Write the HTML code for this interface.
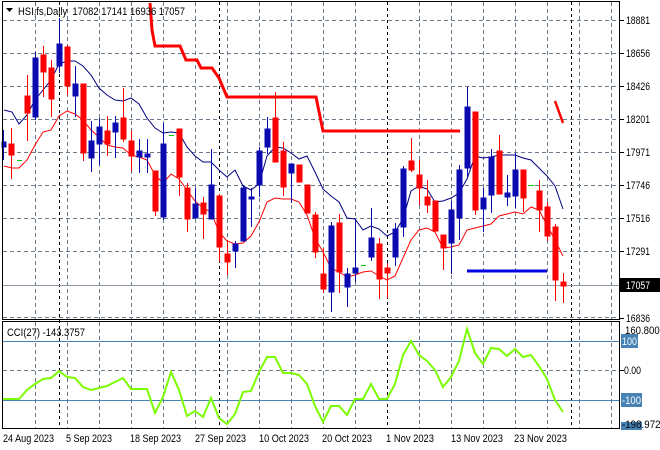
<!DOCTYPE html><html><head><meta charset="utf-8"><style>
html,body{margin:0;padding:0;background:#fff;width:660px;height:450px;overflow:hidden}
svg{display:block}
text{font-family:"Liberation Sans",sans-serif;font-size:11px;fill:#000}
</style></head><body>
<svg width="660" height="450" xmlns="http://www.w3.org/2000/svg">
<rect width="660" height="450" fill="#fff"/>
<g stroke="#6e7b8b" stroke-width="1" stroke-dasharray="4,3" fill="none">
<path d="M3 20.5H620M3 53.5H620M3 86.5H620M3 119.5H620M3 152.5H620M3 185.5H620M3 218.5H620M3 251.5H620M3 317.5H620"/>
<path d="M35.5 2V319M67.5 2V319M99.5 2V319M131.5 2V319M163.5 2V319M195.5 2V319M227.5 2V319M259.5 2V319M291.5 2V319M323.5 2V319M355.5 2V319M419.5 2V319M451.5 2V319M483.5 2V319M515.5 2V319M547.5 2V319M579.5 2V319M611.5 2V319"/>
<path d="M35.5 322V429M67.5 322V429M99.5 322V429M131.5 322V429M163.5 322V429M195.5 322V429M227.5 322V429M259.5 322V429M291.5 322V429M323.5 322V429M355.5 322V429M419.5 322V429M451.5 322V429M483.5 322V429M515.5 322V429M547.5 322V429M579.5 322V429M611.5 322V429M3 370.5H620"/>
</g>
<g stroke="#000" stroke-width="1" stroke-dasharray="3,3">
<path d="M59.5 2V429M219.5 2V429M387.5 2V429M571.5 2V429"/>
</g>
<line x1="3" y1="285.5" x2="620" y2="285.5" stroke="#8a96a2" stroke-width="1"/>
<polyline fill="none" stroke="#f00" stroke-width="3" points="150,3 152,30 155,46 180,46 186,60 197,60 201,68 212,68 219,78 227,97 316,97 323,131 460,131"/>
<line x1="467" y1="271" x2="547" y2="271" stroke="#0000e0" stroke-width="3"/>
<line x1="555" y1="101" x2="563" y2="123" stroke="#f00" stroke-width="2.5"/>
<polyline fill="none" stroke="#000080" stroke-width="1" points="4,110 12,112 19,124 27,115 35,100 43,90 51,80 59,64 67,61 75,61 83,66 91,75 99,88 107,95 115,100 123,101 131,98 139,104 147,118 155,128 163,133 171,132 179,133 187,147 195,156 203,162 211,162 219,170 227,177 235,170 243,186 251,190 259,184 267,156 275,147 283,148 291,153 299,159 307,156 315,172 323,189 331,196 339,202 347,218 355,219 363,230 371,226 379,229 387,236 395,232 403,219 411,191 419,186 427,189 435,202 443,201 451,198 459,193 467,179 475,156 483,158 491,157 499,155 507,155 515,155 523,158 531,160 539,168 547,176 555,186 563,209"/>
<polyline fill="none" stroke="#f00" stroke-width="1" points="4,166 12,168 19,168 27,160 35,145 43,132 51,130 59,116 67,111 75,114 83,120 91,130 99,137 107,145 115,147 123,148 131,155 139,157 147,160 155,175 163,183 171,174 179,179 187,190 195,201 203,208 211,212 219,232 227,241 235,244 243,243 251,236 259,222 267,202 275,198 283,199 291,199 299,202 307,215 315,238 323,252 331,268 339,272 347,277 355,275 363,272 371,271 379,276 387,280 395,276 403,258 411,240 419,230 427,228 435,232 443,248 451,247 459,245 467,230 475,228 483,226 491,224 499,216 507,214 515,212 523,214 531,207 539,210 547,225 555,240 563,256"/>
<g stroke-width="1">
<g stroke="#f00" fill="#f00">
<line x1="11.5" y1="128" x2="11.5" y2="179"/><rect x="9" y="144" width="5" height="11"/>
<line x1="27.5" y1="75" x2="27.5" y2="141"/><rect x="25" y="96" width="5" height="17"/>
<line x1="43.5" y1="46" x2="43.5" y2="97"/><rect x="41" y="55" width="5" height="17"/>
<line x1="51.5" y1="60" x2="51.5" y2="117"/><rect x="49" y="68" width="5" height="31"/>
<line x1="67.5" y1="45" x2="67.5" y2="95"/><rect x="65" y="47" width="5" height="39"/>
<line x1="83.5" y1="84" x2="83.5" y2="161"/><rect x="81" y="84" width="5" height="69"/>
<line x1="107.5" y1="116" x2="107.5" y2="156"/><rect x="105" y="131" width="5" height="13"/>
<line x1="123.5" y1="88" x2="123.5" y2="142"/><rect x="121" y="118" width="5" height="21"/>
<line x1="131.5" y1="130" x2="131.5" y2="171"/><rect x="129" y="141" width="5" height="15"/>
<line x1="155.5" y1="171" x2="155.5" y2="216"/><rect x="153" y="171" width="5" height="40"/>
<line x1="179.5" y1="129" x2="179.5" y2="196"/><rect x="177" y="129" width="5" height="48"/>
<line x1="187.5" y1="183" x2="187.5" y2="232"/><rect x="185" y="188" width="5" height="31"/>
<line x1="203.5" y1="197" x2="203.5" y2="239"/><rect x="201" y="203" width="5" height="11"/>
<line x1="219.5" y1="194" x2="219.5" y2="262"/><rect x="217" y="196" width="5" height="51"/>
<line x1="227.5" y1="240" x2="227.5" y2="275"/><rect x="225" y="254" width="5" height="8"/>
<line x1="275.5" y1="92" x2="275.5" y2="162"/><rect x="273" y="118" width="5" height="44"/>
<line x1="283.5" y1="142" x2="283.5" y2="196"/><rect x="281" y="151" width="5" height="36"/>
<line x1="299.5" y1="165" x2="299.5" y2="182"/><rect x="297" y="165" width="5" height="17"/>
<line x1="307.5" y1="185" x2="307.5" y2="213"/><rect x="305" y="185" width="5" height="28"/>
<line x1="315.5" y1="212" x2="315.5" y2="258"/><rect x="313" y="215" width="5" height="37"/>
<line x1="323.5" y1="248" x2="323.5" y2="293"/><rect x="321" y="274" width="5" height="15"/>
<line x1="339.5" y1="214" x2="339.5" y2="293"/><rect x="337" y="223" width="5" height="49"/>
<line x1="379.5" y1="238" x2="379.5" y2="299"/><rect x="377" y="244" width="5" height="35"/>
<line x1="387.5" y1="263" x2="387.5" y2="298"/><rect x="385" y="268" width="5" height="5"/>
<line x1="411.5" y1="138" x2="411.5" y2="172"/><rect x="409" y="161" width="5" height="9"/>
<line x1="419.5" y1="160" x2="419.5" y2="205"/><rect x="417" y="175" width="5" height="13"/>
<line x1="427.5" y1="180" x2="427.5" y2="213"/><rect x="425" y="197" width="5" height="8"/>
<line x1="435.5" y1="201" x2="435.5" y2="231"/><rect x="433" y="201" width="5" height="30"/>
<line x1="443.5" y1="235" x2="443.5" y2="270"/><rect x="441" y="235" width="5" height="13"/>
<line x1="475.5" y1="112" x2="475.5" y2="215"/><rect x="473" y="112" width="5" height="98"/>
<line x1="499.5" y1="135" x2="499.5" y2="194"/><rect x="497" y="151" width="5" height="43"/>
<line x1="523.5" y1="170" x2="523.5" y2="212"/><rect x="521" y="170" width="5" height="28"/>
<line x1="539.5" y1="180" x2="539.5" y2="232"/><rect x="537" y="191" width="5" height="19"/>
<line x1="547.5" y1="202" x2="547.5" y2="241"/><rect x="545" y="207" width="5" height="29"/>
<line x1="555.5" y1="224" x2="555.5" y2="301"/><rect x="553" y="227" width="5" height="53"/>
<line x1="563.5" y1="273" x2="563.5" y2="303"/><rect x="561" y="282" width="5" height="4"/>
</g>
<g stroke="#0a0ab0" fill="#0a0ab0">
<line x1="3.5" y1="130" x2="3.5" y2="160"/><rect x="2" y="142" width="4" height="5"/>
<line x1="35.5" y1="52" x2="35.5" y2="120"/><rect x="33" y="58" width="5" height="59"/>
<line x1="59.5" y1="18" x2="59.5" y2="73"/><rect x="57" y="44" width="5" height="22"/>
<line x1="75.5" y1="66" x2="75.5" y2="117"/><rect x="73" y="84" width="5" height="12"/>
<line x1="91.5" y1="121" x2="91.5" y2="172"/><rect x="89" y="141" width="5" height="17"/>
<line x1="99.5" y1="118" x2="99.5" y2="165"/><rect x="97" y="127" width="5" height="17"/>
<line x1="115.5" y1="116" x2="115.5" y2="158"/><rect x="113" y="123" width="5" height="9"/>
<line x1="139.5" y1="139" x2="139.5" y2="173"/><rect x="137" y="151" width="5" height="6"/>
<line x1="147.5" y1="139" x2="147.5" y2="173"/><rect x="145" y="154" width="5" height="3"/>
<line x1="163.5" y1="123" x2="163.5" y2="220"/><rect x="161" y="144" width="5" height="73"/>
<line x1="195.5" y1="188" x2="195.5" y2="218"/><rect x="193" y="204" width="5" height="14"/>
<line x1="211.5" y1="149" x2="211.5" y2="219"/><rect x="209" y="185" width="5" height="34"/>
<line x1="235.5" y1="241" x2="235.5" y2="268"/><rect x="233" y="244" width="5" height="7"/>
<line x1="243.5" y1="185" x2="243.5" y2="241"/><rect x="241" y="188" width="5" height="53"/>
<line x1="251.5" y1="188" x2="251.5" y2="227"/><rect x="249" y="197" width="5" height="2"/>
<line x1="259.5" y1="147" x2="259.5" y2="197"/><rect x="257" y="151" width="5" height="34"/>
<line x1="267.5" y1="117" x2="267.5" y2="154"/><rect x="265" y="129" width="5" height="18"/>
<line x1="291.5" y1="164" x2="291.5" y2="203"/><rect x="289" y="164" width="5" height="9"/>
<line x1="331.5" y1="222" x2="331.5" y2="312"/><rect x="329" y="226" width="5" height="66"/>
<line x1="347.5" y1="268" x2="347.5" y2="307"/><rect x="345" y="274" width="5" height="13"/>
<line x1="355.5" y1="219" x2="355.5" y2="282"/><rect x="353" y="268" width="5" height="5"/>
<line x1="371.5" y1="208" x2="371.5" y2="261"/><rect x="369" y="238" width="5" height="19"/>
<line x1="395.5" y1="223" x2="395.5" y2="266"/><rect x="393" y="229" width="5" height="28"/>
<line x1="403.5" y1="166" x2="403.5" y2="237"/><rect x="401" y="169" width="5" height="58"/>
<line x1="451.5" y1="201" x2="451.5" y2="274"/><rect x="449" y="210" width="5" height="33"/>
<line x1="459.5" y1="165" x2="459.5" y2="240"/><rect x="457" y="170" width="5" height="48"/>
<line x1="467.5" y1="87" x2="467.5" y2="177"/><rect x="465" y="107" width="5" height="61"/>
<line x1="483.5" y1="188" x2="483.5" y2="232"/><rect x="481" y="198" width="5" height="11"/>
<line x1="491.5" y1="149" x2="491.5" y2="213"/><rect x="489" y="157" width="5" height="38"/>
<line x1="507.5" y1="175" x2="507.5" y2="206"/><rect x="505" y="193" width="5" height="4"/>
<line x1="515.5" y1="153" x2="515.5" y2="208"/><rect x="513" y="170" width="5" height="26"/>
</g>
<g stroke="#00cc00" stroke-width="1"><path d="M17 160.5H22M169 135.5H174M361 265.5H366M529 185.5H534"/></g>
</g>
<g stroke="#4682b4" stroke-width="1"><path d="M3 341.5H620M3 400.5H620"/></g>
<polyline fill="none" stroke="#7cfc00" stroke-width="2" points="3,399 19,399 27,390 35,384 43,379 51,378 59,371 67,377 75,378 83,387 91,390 99,388 107,386 115,382 123,378 131,389 139,389 147,389 155,413 163,397 171,372 179,390 187,416 195,411 203,417 211,398 219,418 227,424 235,414 243,392 251,391 259,372 267,357 275,357 283,373 291,373 299,375 307,384 315,406 323,422 331,406 339,406 347,415 355,399 363,399 371,384 379,399 387,399 395,384 403,355 411,341 419,355 427,361 435,370 443,387 451,377 459,361 467,329 475,353 483,364 491,348 499,349 507,356 515,349 523,357 531,355 539,366 547,379 555,400 563,412"/>
<rect x="2.5" y="1.5" width="617" height="318" fill="none" stroke="#000"/>
<rect x="2.5" y="321.5" width="617" height="107" fill="none" stroke="#000"/>
<path d="M6 8H13L9.5 12Z" fill="#000"/>
<text x="18" y="15" textLength="167" lengthAdjust="spacingAndGlyphs">HSI,fs,Daily&#160;&#160;17082 17141 16936 17057</text>
<text x="7" y="336" textLength="78" lengthAdjust="spacingAndGlyphs">CCI(27) -143.3757</text>
<g stroke="#000"><path d="M620 20.5h4M620 53.5h4M620 86.5h4M620 119.5h4M620 152.5h4M620 185.5h4M620 218.5h4M620 251.5h4M620 318.5h4M620 370.5h4"/></g>
<g>
<text x="626" y="24" textLength="24" lengthAdjust="spacingAndGlyphs">18881</text><text x="626" y="57" textLength="24" lengthAdjust="spacingAndGlyphs">18656</text><text x="626" y="90" textLength="24" lengthAdjust="spacingAndGlyphs">18426</text><text x="626" y="123" textLength="24" lengthAdjust="spacingAndGlyphs">18201</text><text x="626" y="156" textLength="24" lengthAdjust="spacingAndGlyphs">17971</text><text x="626" y="189" textLength="24" lengthAdjust="spacingAndGlyphs">17746</text><text x="626" y="222" textLength="24" lengthAdjust="spacingAndGlyphs">17516</text><text x="626" y="255" textLength="24" lengthAdjust="spacingAndGlyphs">17291</text><text x="626" y="322" textLength="24" lengthAdjust="spacingAndGlyphs">16836</text>
</g>
<rect x="620" y="278" width="40" height="14" fill="#000"/><text x="626" y="289" textLength="24" lengthAdjust="spacingAndGlyphs" style="fill:#fff">17057</text>
<text x="625" y="334" textLength="40" lengthAdjust="spacingAndGlyphs">160.8006</text>
<rect x="621" y="334" width="17" height="14" fill="#4682b4"/><text x="622" y="345" textLength="15" lengthAdjust="spacingAndGlyphs" style="fill:#fff">100</text>
<text x="624" y="374" textLength="17" lengthAdjust="spacingAndGlyphs">0.00</text>
<rect x="621" y="393" width="21" height="14" fill="#4682b4"/><text x="622" y="404" textLength="19" lengthAdjust="spacingAndGlyphs" style="fill:#fff">-100</text>
<rect x="621" y="422" width="21" height="8" fill="#4682b4"/>
<text x="622" y="428" textLength="44" lengthAdjust="spacingAndGlyphs">-198.9723</text>
<g>
<text x="3" y="442" textLength="51" lengthAdjust="spacingAndGlyphs">24 Aug 2023</text><text x="66" y="442" textLength="46" lengthAdjust="spacingAndGlyphs">5 Sep 2023</text><text x="130" y="442" textLength="51" lengthAdjust="spacingAndGlyphs">18 Sep 2023</text><text x="195" y="442" textLength="51" lengthAdjust="spacingAndGlyphs">27 Sep 2023</text><text x="259" y="442" textLength="50" lengthAdjust="spacingAndGlyphs">10 Oct 2023</text><text x="322" y="442" textLength="50" lengthAdjust="spacingAndGlyphs">20 Oct 2023</text><text x="386" y="442" textLength="48" lengthAdjust="spacingAndGlyphs">1 Nov 2023</text><text x="451" y="442" textLength="52" lengthAdjust="spacingAndGlyphs">13 Nov 2023</text><text x="514" y="442" textLength="53" lengthAdjust="spacingAndGlyphs">23 Nov 2023</text>
</g>
</svg>
</body></html>
